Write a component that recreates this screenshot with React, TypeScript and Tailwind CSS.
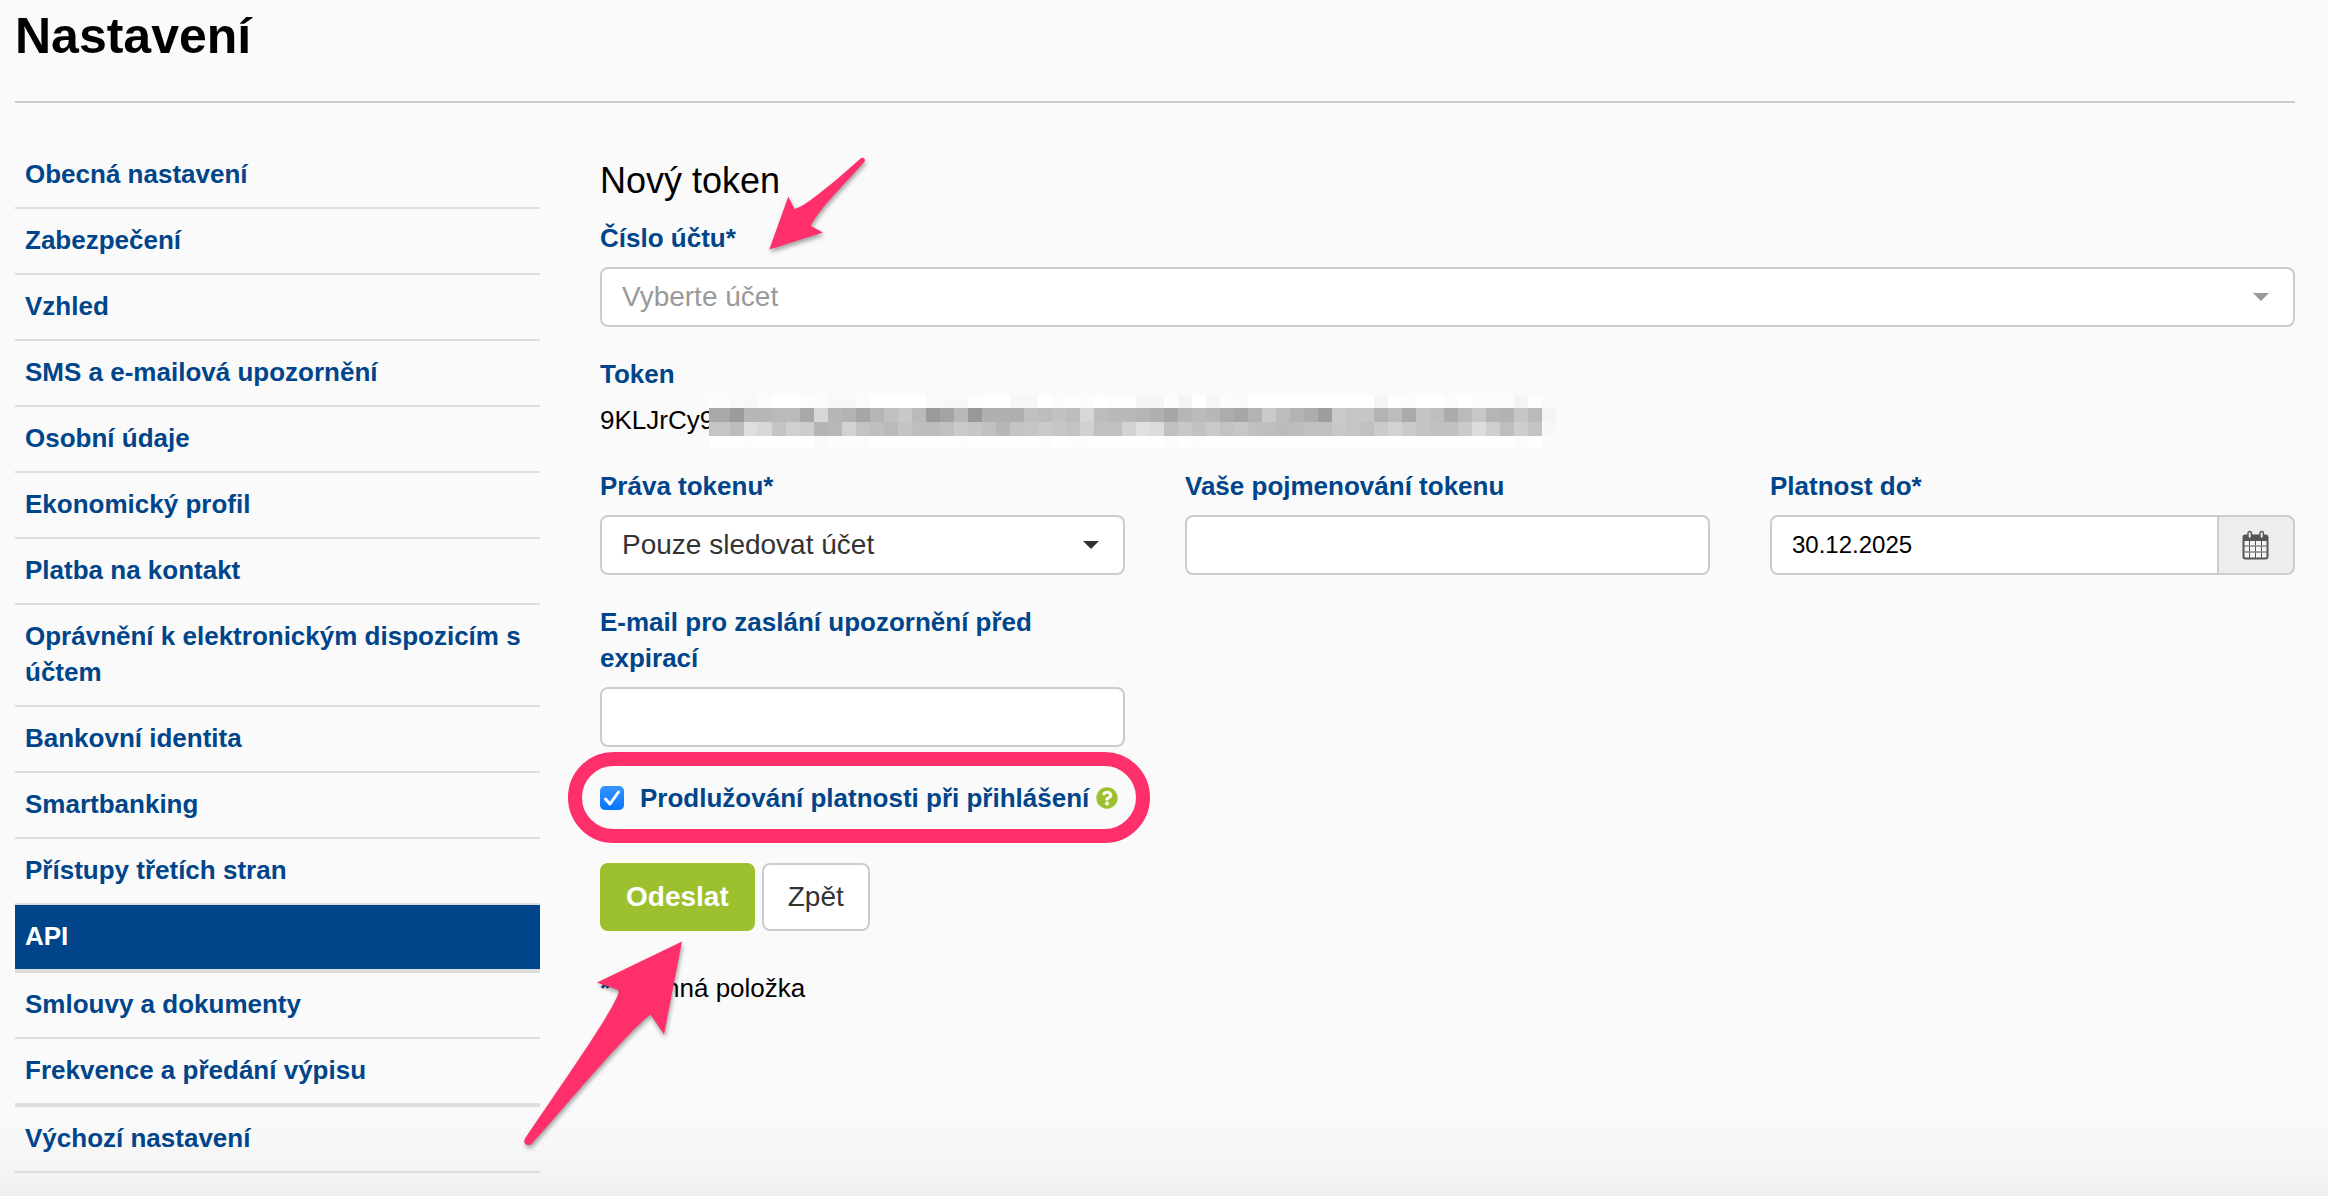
import React from "react";
import { FaQuestionCircle } from "react-icons/fa";

const menuGroups = [
  [
    "Obecná nastavení",
    "Zabezpečení",
    "Vzhled",
    "SMS a e-mailová upozornění",
    "Osobní údaje",
    "Ekonomický profil",
    "Platba na kontakt",
    "Oprávnění k elektronickým dispozicím s účtem",
    "Bankovní identita",
    "Smartbanking",
    "Přístupy třetích stran",
    "API",
  ],
  ["Smlouvy a dokumenty", "Frekvence a předání výpisu"],
  ["Výchozí nastavení"],
];

const activeItem = "API";

// Grey levels of the mosaic that hides the rest of the token, one hex pair per cell.
const mosaicRows = [
  {
    y: 0,
    h: 13,
    cells:
      "fc f9 f8 fc ff ff fd fb f8 f8 fb ff ff ff ff f9 f8 f8 fd ff ff f6 f6 ff fc fd fc ff fd fd f4 f5 fc f5 ff f6 fc fa ff ff ff ff ff ff ff ff ff f4 fd fc ff ff fc ff fc fc fb f4 fd fa",
  },
  {
    y: 13,
    h: 14,
    cells:
      "a8 9c b6 b6 ba ba a9 d7 b6 b3 a6 b5 c1 c8 ba 9a a3 b8 98 b0 b0 af c0 bd c2 bd d7 bd b9 b9 b5 b0 a7 b6 bb b7 ac a6 b3 ca bc b3 ac 9e ca c5 c6 b3 bc aa c4 be ab bb c7 b5 b2 c5 ba f4",
  },
  {
    y: 27,
    h: 14,
    cells:
      "c5 bc de d7 c4 d0 cd b4 b8 d2 c3 bf ba c4 be bc c0 ca c6 c0 b7 c4 c5 ca c6 c3 d1 c0 c0 d2 e0 db c0 c8 c2 ca c3 c7 c0 be bb bc c0 c0 c8 c5 c0 cb d2 ca c4 c1 c1 ca dd cf be cd c4 f8",
  },
  {
    y: 41,
    h: 11,
    cells:
      "ff ff fd ff ff ff ff f9 fc fc fc ff ff ff ff ff ff fd ff ff ff ff ff fd ff fd fd ff ff ff ff ff fc ff fd ff ff ff ff ff ff ff ff ff ff ff ff ff ff ff ff ff ff ff ff ff ff fc ff fa",
  },
];

function Mosaic() {
  return (
    <svg
      aria-hidden="true"
      className="pointer-events-none absolute -top-[7px] left-[109px]"
      width="848"
      height="52"
      viewBox="0 0 848 52"
      shapeRendering="crispEdges"
    >
      {mosaicRows.map((row) =>
        row.cells.split(" ").map((level, i) => (
          <rect
            key={`${row.y}-${i}`}
            x={i === 0 ? 0 : 7 + i * 14}
            y={row.y}
            width={i === 0 ? 21 : 14}
            height={row.h}
            fill={`#${level}${level}${level}`}
          />
        )),
      )}
    </svg>
  );
}

function CalendarIcon() {
  return (
    <svg aria-hidden="true" width="28" height="30" viewBox="0 0 28 30" fill="none">
      <rect x="1.5" y="5.5" width="24" height="23" rx="2" fill="#f4f4f4" stroke="#555" strokeWidth="2" />
      <rect x="1" y="5" width="25" height="6" rx="1.5" fill="#555" />
      <path d="M7.5 11v17M13.5 11v17M19.5 11v17" stroke="#555" strokeWidth="1" />
      <path d="M2 16h23M2 22h23" stroke="#888" strokeWidth="1.6" />
      <rect x="6" y="1.5" width="3.4" height="7" rx="1.7" fill="#ededed" stroke="#555" strokeWidth="1.4" />
      <rect x="18" y="1.5" width="3.4" height="7" rx="1.7" fill="#ededed" stroke="#555" strokeWidth="1.4" />
    </svg>
  );
}

function Caret({ className }: { className: string }) {
  return (
    <svg
      aria-hidden="true"
      className={`pointer-events-none absolute top-[26px] right-[26px] ${className}`}
      width="16"
      height="8"
      viewBox="0 0 16 8"
    >
      <path d="M0 0h16L8 8z" fill="currentColor" />
    </svg>
  );
}

function Label({ htmlFor, children }: { htmlFor: string; children: React.ReactNode }) {
  return (
    <label htmlFor={htmlFor} className="mb-[11px] block font-bold text-[#00458a]">
      {children}
    </label>
  );
}

const control = "block h-[60px] w-full appearance-none border-2 border-[#ccc] bg-white px-5 outline-none";

function Sidebar() {
  return (
    <nav aria-label="Nastavení">
      {menuGroups.map((group, g) => (
        <ul key={g} className={g > 0 ? "border-t-2 border-[#ddd]" : ""}>
          {group.map((item) => (
            <li key={item} className="border-b-2 border-[#ddd]">
              <a
                href="#"
                aria-current={item === activeItem ? "page" : undefined}
                className={`block px-2.5 pt-[13px] pb-[15px] font-bold ${
                  item === activeItem ? "bg-[#00458a] text-white" : "text-[#00458a]"
                }`}
              >
                {item}
              </a>
            </li>
          ))}
        </ul>
      ))}
    </nav>
  );
}

function TokenForm() {
  return (
    <form className="col-span-3 pt-[18px]">
      <h2 className="relative mb-[19px] text-4xl leading-10">
        Nový token
        <svg
          aria-hidden="true"
          className="pointer-events-none absolute -top-4 left-40 drop-shadow-[1px_3px_2px_rgba(0,0,0,0.35)]"
          width="120"
          height="115"
          viewBox="0 0 120 115"
        >
          <path
            d="M9.300 104.500 L28.300 51.500 L34.500 64 C47 61 82 30 100.500 13.500 C103 11.500 106 14 104.500 16.500 C88 36 60 62 50.800 81 L63 87.500 Z"
            fill="#ff2f6c"
          />
        </svg>
      </h2>

      <Label htmlFor="account">Číslo účtu*</Label>
      <div className="relative">
        <select id="account" defaultValue="" className={`${control} rounded-lg text-[28px] text-[#999]`}>
          <option value="">Vyberte účet</option>
        </select>
        <Caret className="text-[#999]" />
      </div>

      <div className="mt-[29px]">
        <p className="font-bold text-[#00458a]">Token</p>
        <p className="relative mt-2.5">
          9KLJrCy9
          <Mosaic />
        </p>
      </div>

      <div className="mt-[30px] grid grid-cols-3 gap-x-[60px] gap-y-[29px]">
        <div>
          <Label htmlFor="rights">Práva tokenu*</Label>
          <div className="relative">
            <select id="rights" className={`${control} rounded-lg text-[28px] text-[#333]`}>
              <option>Pouze sledovat účet</option>
            </select>
            <Caret className="text-[#333]" />
          </div>
        </div>
        <div>
          <Label htmlFor="name">Vaše pojmenování tokenu</Label>
          <input id="name" type="text" className={`${control} rounded-lg`} />
        </div>
        <div>
          <Label htmlFor="expires">Platnost do*</Label>
          <div className="flex">
            <input
              id="expires"
              type="text"
              defaultValue="30.12.2025"
              className={`${control} min-w-0 flex-1 rounded-l-lg border-r-0 text-2xl`}
            />
            <button
              type="button"
              aria-label="Vybrat datum"
              className="flex w-[78px] items-center justify-center rounded-r-lg border-2 border-[#ccc] bg-[#ededed]"
            >
              <CalendarIcon />
            </button>
          </div>
        </div>
        <div>
          <Label htmlFor="email">E-mail pro zaslání upozornění před expirací</Label>
          <input id="email" type="email" className={`${control} rounded-lg`} />
        </div>
      </div>

      <div className="relative mt-[33px] flex w-fit items-center">
        <label className="flex items-center gap-4 font-bold text-[#00458a]">
          <span className="grid size-6 place-items-center">
            <input
              type="checkbox"
              defaultChecked
              className="peer col-start-1 row-start-1 size-6 appearance-none rounded-[5px] border border-[#b5b5b5] bg-white checked:border-0 checked:bg-linear-to-b checked:from-[#3395ff] checked:to-[#0074fd]"
            />
            <svg
              aria-hidden="true"
              className="pointer-events-none col-start-1 row-start-1 hidden peer-checked:block"
              width="24"
              height="24"
              viewBox="0 0 24 24"
            >
              <path
                d="M5.500 13 L10 18 L18.500 6"
                fill="none"
                stroke="#fff"
                strokeWidth="3"
                strokeLinecap="round"
                strokeLinejoin="round"
              />
            </svg>
          </span>
          Prodlužování platnosti při přihlášení
        </label>
        <button type="button" aria-label="Nápověda" className="ml-[7px] text-[#9dc02e]">
          <FaQuestionCircle size={22} />
        </button>
        <div className="pointer-events-none absolute -inset-x-8 -top-7 -bottom-[27px] rounded-[46px] border-14 border-[#ff2f6c]" />
      </div>

      <div className="mt-[47px] flex gap-[7px] text-[28px]">
        <button type="submit" className="h-[68px] rounded-lg bg-[#9dc02e] px-[26px] font-bold text-white">
          Odeslat
        </button>
        <button type="button" className="h-[68px] rounded-lg border-2 border-[#ccc] bg-white px-6 text-[#333]">
          Zpět
        </button>
      </div>

      <p className="relative mt-[39px]">
        <span className="font-bold text-[#00458a]">*</span> povinná položka
        <svg
          aria-hidden="true"
          className="pointer-events-none absolute -top-10 -left-[90px] drop-shadow-[1px_3px_2px_rgba(0,0,0,0.35)]"
          width="200"
          height="230"
          viewBox="0 0 200 230"
        >
          <path
            d="M172 11.500 L87 52.500 L109.500 60.500 C104 80 60 142 15 208.500 C12 214 18.500 217.500 22.500 213 C50 183 115 104 140.500 84.500 L154 104.500 Z"
            fill="#ff2f6c"
          />
        </svg>
      </p>
    </form>
  );
}

export default function App() {
  return (
    <div className="min-h-screen bg-[linear-gradient(to_top,#ededed,#f5f5f5_28px,#fafafa_90px)] pt-1.5 pr-[33px] pl-[15px] font-['Liberation_Sans',Arial,sans-serif] text-[26px] leading-9 text-black">
      <header className="border-b-2 border-[#ccc] pb-[35px]">
        <h1 className="text-[50px] leading-[60px] font-bold">Nastavení</h1>
      </header>
      <main className="mt-10 grid grid-cols-4 items-start gap-x-[60px]">
        <Sidebar />
        <TokenForm />
      </main>
    </div>
  );
}
